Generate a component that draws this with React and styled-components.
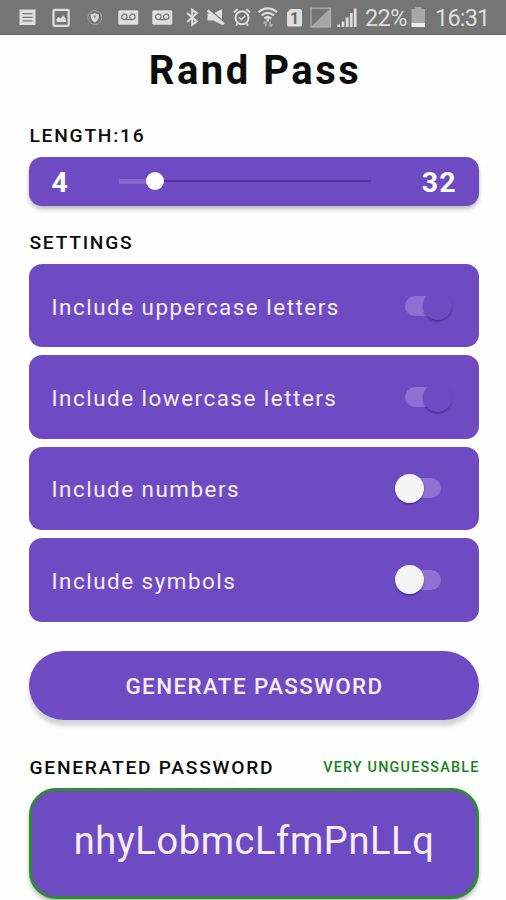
import React, { useState } from 'react'
import styled, { createGlobalStyle } from 'styled-components'

const colors = {
  primary: '#6f4bc3',
  light: '#9070d3',
  fill: '#8863d2',
  rail: '#5330a0',
  text: '#0c0c0c',
  onPrimary: '#f6eeff',
  green: '#178017',
  border: '#2f8a35',
  status: '#757575',
  icon: '#dedede',
}

const GlobalStyle = createGlobalStyle`
  body {
    margin: 0;
    background: #fefefe;
    font-family: Roboto, 'Liberation Sans', sans-serif;
    color: ${colors.text};
    overflow: hidden;
  }
`

const Screen = styled.div`
  width: 506px;
  height: 900px;
  display: flex;
  flex-direction: column;
  overflow: hidden;
`

const StatusBar = styled.header`
  flex: none;
  display: flex;
  align-items: center;
  box-sizing: border-box;
  height: 35px;
  padding-left: 19px;
  background: ${colors.status};
  box-shadow: inset 0 -1px 0 #686868;
  color: ${colors.icon};
`

const Glyph = styled.svg`
  flex: none;
  display: block;
  width: ${props => props.$width}px;
  height: 21px;
  margin-left: ${props => props.$gap || 0}px;
`

const StatusText = styled.span`
  flex: none;
  width: ${props => props.$width}px;
  margin-left: ${props => props.$gap}px;
  padding-top: 1px;
  font-size: 23.5px;
  line-height: 35px;
  letter-spacing: ${props => props.$spacing}px;
  white-space: nowrap;
`

const Content = styled.main`
  display: flex;
  flex-direction: column;
  padding: 0 27.5px 0 28.5px;
`

const Title = styled.h1`
  margin: 12px 0 0;
  padding-left: 3px;
  font-size: 40px;
  font-weight: 700;
  line-height: 47px;
  letter-spacing: 2.5px;
  text-align: center;
`

const Label = styled.h2`
  margin: 0 0 0 1px;
  font-size: 19.2px;
  font-weight: 500;
  line-height: 24px;
  letter-spacing: 1.75px;
  white-space: nowrap;
`

const Section = styled.section`
  display: flex;
  flex-direction: column;
  margin-top: ${props => props.$top}px;
`

const LengthCard = styled.div`
  display: flex;
  align-items: center;
  box-sizing: border-box;
  height: 49px;
  margin-top: 8.5px;
  padding: 2px 22px 0 23px;
  border-radius: 13px;
  background: ${colors.primary};
  box-shadow: 0 3px 4px rgba(0, 0, 0, 0.26);
  color: #fff;
`

const Limit = styled.span`
  width: ${props => props.$width}px;
  padding-top: 2px;
  font-size: 28.5px;
  font-weight: 700;
  line-height: 34px;
  letter-spacing: 1px;
  text-align: ${props => props.$align || 'left'};
`

const Slider = styled.div`
  display: flex;
  align-items: center;
  width: 252px;
  height: 18px;
  margin: 0 auto 2px 0;
`

const SliderFill = styled.div`
  width: 27px;
  height: 5px;
  background: ${colors.fill};
`

const SliderThumb = styled.div`
  width: 18px;
  height: 18px;
  border-radius: 50%;
  background: #fff;
`

const SliderRail = styled.div`
  flex: 1;
  height: 2px;
  background: ${colors.rail};
`

const Options = styled.div`
  display: flex;
  flex-direction: column;
  gap: 8px;
  margin-top: 9.5px;
`

const Option = styled.label`
  display: flex;
  align-items: center;
  justify-content: space-between;
  box-sizing: border-box;
  height: 83.4px;
  padding: 0 26.5px 0 23px;
  border-radius: 13px;
  background: ${colors.primary};
  color: ${colors.onPrimary};
  cursor: pointer;
`

const OptionText = styled.span`
  padding-top: 2px;
  font-size: 22.4px;
  line-height: 30px;
  letter-spacing: 1.51px;
`

const Toggle = styled.span`
  display: flex;
  align-items: center;
  width: 57.5px;
  height: 29px;
`

const Track = styled.span`
  width: 36px;
  height: 20px;
  margin: 0 auto;
  border-radius: 10px;
  background: ${colors.light};
`

/* The knob overlaps the track, so it gives back its own width in the row. */
const Knob = styled.span`
  position: relative;
  width: 29px;
  height: 29px;
  margin-left: ${props => (props.$on ? '-29px' : '0')};
  margin-right: ${props => (props.$on ? '0' : '-29px')};
  order: ${props => (props.$on ? 1 : -1)};
  border-radius: 50%;
  background: ${props => (props.$on ? colors.primary : '#f5f5f5')};
  box-shadow: 0 1.5px 2px rgba(30, 0, 80, 0.4);
`

const HiddenCheckbox = styled.input`
  display: none;
`

const GenerateButton = styled.button`
  height: 69.5px;
  margin-top: 29px;
  padding: 2px 0 0 2px;
  border: 0;
  border-radius: 35px;
  background: ${colors.primary};
  box-shadow: 0 6px 4px rgba(0, 0, 0, 0.17);
  color: ${colors.onPrimary};
  font: 500 22.4px/30px Roboto, 'Liberation Sans', sans-serif;
  letter-spacing: 1.4px;
`

const ResultHeader = styled.div`
  display: flex;
  justify-content: space-between;
  align-items: center;
  height: 24px;
`

const Strength = styled.span`
  margin-right: -1px;
  color: ${colors.green};
  font-size: 14.4px;
  font-weight: 500;
  line-height: 24px;
  letter-spacing: 1.18px;
  white-space: nowrap;
`

const Password = styled.div`
  display: flex;
  align-items: center;
  justify-content: center;
  box-sizing: border-box;
  height: 111px;
  margin-top: 8.5px;
  padding: 0 0 6px 1px;
  border: 3.4px solid ${colors.border};
  border-radius: 27px;
  background: ${colors.primary};
  box-shadow: 0 3px 4px rgba(0, 0, 0, 0.26);
  color: ${colors.onPrimary};
  font-size: 38px;
  line-height: 46px;
  letter-spacing: 0.6px;
`

const ListIcon = () => (
  <Glyph $width={17} viewBox="0 0 17 21" fill="none">
    <path d="M.5 2.5h16V18H.5z" fill={colors.icon} />
    <path d="M3.5 6.6h10M3.5 10.3h10M3.5 13.9h10" stroke="#777" strokeWidth="1.3" />
  </Glyph>
)

const PictureIcon = () => (
  <Glyph $width={18} $gap={16} viewBox="0 0 18 21" fill="none">
    <rect x="1.5" y="2.8" width="15.2" height="16" rx="1" stroke={colors.icon} strokeWidth="2.2" />
    <path d="M4.5 15v-3l2-2 2 1.4 2.7-2.9 2.6 3.6V15z" fill={colors.icon} />
  </Glyph>
)

const ShieldIcon = () => (
  <Glyph $width={16} $gap={16.5} viewBox="0 0 16 21" fill="none">
    <circle cx="7.8" cy="10.5" r="7" stroke="#a5a5a5" />
    <path d="M3.6 7.3c1.8 0 3-.4 4.2-1.3 1.2.9 2.4 1.3 4.2 1.3 0 4-1 6.3-4.2 8.3-3.2-2-4.2-4.3-4.2-8.3z" fill={colors.icon} />
    <path d="M7.8 8v3.6M6.3 9.3h3" stroke="#888" strokeWidth="1.1" />
  </Glyph>
)

const VoicemailIcon = ({ gap }) => (
  <Glyph $width={21} $gap={gap} viewBox="0 0 21 21" fill="none">
    <rect x=".3" y="3.3" width="20" height="14.4" rx="1.5" fill={colors.icon} />
    <g stroke="#777" strokeWidth="1.2">
      <circle cx="6.3" cy="9.8" r="2.7" />
      <circle cx="14.3" cy="9.8" r="2.7" />
      <path d="M6.3 12.6h8" />
    </g>
  </Glyph>
)

const BluetoothIcon = () => (
  <Glyph $width={13} $gap={13.5} viewBox="0 0 13 21" fill="none">
    <path d="M1.2 6l9.6 8.4-4.6 3.4V2.8l4.6 3.4L1.2 15" stroke={colors.icon} strokeWidth="2" />
  </Glyph>
)

const MuteIcon = () => (
  <Glyph $width={18} $gap={8} viewBox="0 0 18 21" fill="none">
    <path d="M.5 6.5h6L15 2v16l-8.500-4.500h-6z" fill={colors.icon} />
    <path d="M1.500 1.800l16 13.600" stroke={colors.status} strokeWidth="1.500" />
    <path d="M.5 3.300l16.500 14" stroke={colors.icon} strokeWidth="2.600" />
  </Glyph>
)

const AlarmIcon = () => (
  <Glyph $width={18} $gap={7.5} viewBox="0 0 18 21" fill="none" stroke={colors.icon}>
    <circle cx="9" cy="10.8" r="6.5" strokeWidth="2" />
    <path d="M.9 5.5l3.7-3.4M17.1 5.5l-3.7-3.4" strokeWidth="1.9" />
    <path d="M4.6 16.2L3 18.6M13.4 16.2l1.6 2.4" strokeWidth="1.7" />
    <path d="M6 10.5l2.4 2.3 3.8-4" strokeWidth="1.5" />
  </Glyph>
)

const WifiIcon = () => (
  <Glyph $width={20} $gap={7.5} viewBox="0 0 20 21" fill="none" stroke={colors.icon}>
    <path d="M.7 5.2c5.3-5.1 12.8-5.1 18.2 0" strokeWidth="2.3" />
    <path d="M3.6 8.5c3.6-3.4 8.8-3.4 12.4 0" strokeWidth="2.3" />
    <path d="M6.4 11.6c2-1.9 4.8-1.9 6.8 0" strokeWidth="2.3" />
    <path d="M9.8 11.5v3" strokeWidth="2.4" />
    <path d="M7.8 19.5v-5M5.5 16.5l2.3-2M12.2 14.5v5M12.2 19.5l2.3-2.1" strokeWidth="1.7" stroke="#b0b0b0" />
  </Glyph>
)

const SimBadge = styled.span`
  flex: none;
  width: 15px;
  height: 18px;
  margin-left: 9px;
  border-radius: 2px;
  background: ${colors.icon};
  clip-path: polygon(4px 0, 100% 0, 100% 100%, 0 100%, 0 4px);
  color: #666;
  font-size: 16px;
  font-weight: 700;
  line-height: 19px;
  text-align: center;
`

const NoSignalIcon = () => (
  <Glyph $width={22} $gap={7.5} viewBox="0 0 22 21" fill="none">
    <path d="M20.5 1L1 20h19.5z" fill="#a5a5a5" />
    <rect x="1" y="1.2" width="19.5" height="18.8" stroke="#b2b2b2" strokeWidth="1.2" />
  </Glyph>
)

const SignalIcon = () => (
  <Glyph $width={20} $gap={5} viewBox="0 0 20 21" fill="none" stroke={colors.icon} strokeWidth="2.7">
    <path d="M1.7 20v-2.5M6 20v-5.5M10.2 20v-9.5M14.3 20V6M18.2 20V1.5" />
  </Glyph>
)

const BatteryIcon = () => (
  <Glyph $width={15} $gap={3.5} viewBox="0 0 15 21">
    <path d="M4.3 0h6v2H14v14H.5V2h3.8z" fill="#a8a8a8" />
    <path d="M.5 16H14v4H.5z" fill="#eee" />
  </Glyph>
)

const initialOptions = [
  { key: 'uppercase', label: 'Include uppercase letters', on: true },
  { key: 'lowercase', label: 'Include lowercase letters', on: true },
  { key: 'numbers', label: 'Include numbers', on: false },
  { key: 'symbols', label: 'Include symbols', on: false },
]

const App = () => {
  const [options, setOptions] = useState(initialOptions)

  const toggle = key =>
    setOptions(
      options.map(option =>
        option.key === key ? { ...option, on: !option.on } : option
      )
    )

  return (
    <Screen>
      <GlobalStyle />
      <StatusBar>
        <ListIcon />
        <PictureIcon />
        <ShieldIcon />
        <VoicemailIcon gap={15} />
        <VoicemailIcon gap={13} />
        <BluetoothIcon />
        <MuteIcon />
        <AlarmIcon />
        <WifiIcon />
        <SimBadge>1</SimBadge>
        <NoSignalIcon />
        <SignalIcon />
        <StatusText $width={42.5} $gap={8.5} $spacing={-0.6}>
          22%
        </StatusText>
        <BatteryIcon />
        <StatusText $width={56} $gap={9} $spacing={-0.8}>
          16:31
        </StatusText>
      </StatusBar>
      <Content>
        <Title>Rand Pass</Title>
        <Section $top={30}>
          <Label>LENGTH:16</Label>
          <LengthCard>
            <Limit $width={67.5}>4</Limit>
            <Slider>
              <SliderFill />
              <SliderThumb />
              <SliderRail />
            </Slider>
            <Limit $width={60} $align="right">
              32
            </Limit>
          </LengthCard>
        </Section>
        <Section $top={25}>
          <Label>SETTINGS</Label>
          <Options>
            {options.map(({ key, label, on }) => (
              <Option key={key}>
                <OptionText>{label}</OptionText>
                <HiddenCheckbox
                  type="checkbox"
                  checked={on}
                  onChange={() => toggle(key)}
                />
                <Toggle>
                  <Track />
                  <Knob $on={on} />
                </Toggle>
              </Option>
            ))}
          </Options>
        </Section>
        <GenerateButton>GENERATE PASSWORD</GenerateButton>
        <Section $top={35.5}>
          <ResultHeader>
            <Label>GENERATED PASSWORD</Label>
            <Strength>VERY UNGUESSABLE</Strength>
          </ResultHeader>
          <Password>nhyLobmcLfmPnLLq</Password>
        </Section>
      </Content>
    </Screen>
  )
}

export default App
